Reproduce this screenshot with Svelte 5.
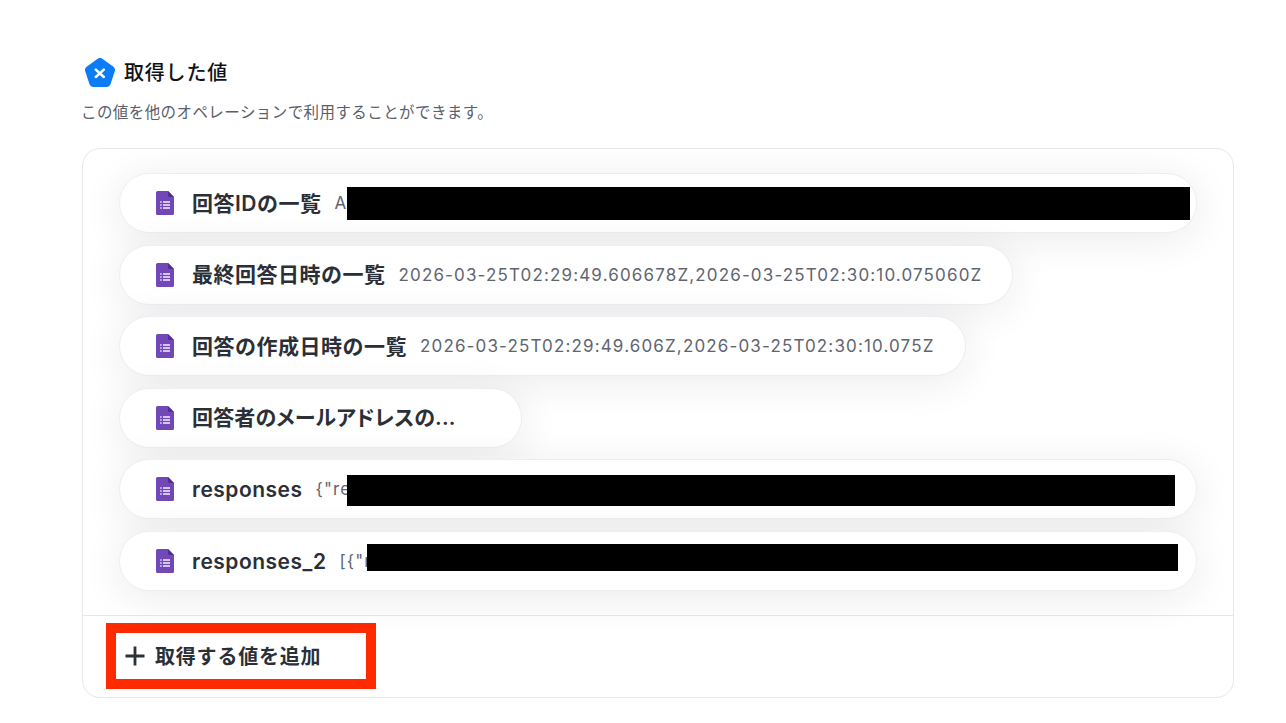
<script>
  const rows = [
    { label: '回答IDの一覧', value: 'A', wide: true, mask: 'm1' },
    { label: '最終回答日時の一覧', value: '2026-03-25T02:29:49.606678Z,2026-03-25T02:30:10.075060Z' },
    { label: '回答の作成日時の一覧', value: '2026-03-25T02:29:49.606Z,2026-03-25T02:30:10.075Z' },
    { label: '回答者のメールアドレスの...', value: '', cut: true },
    { label: 'responses', value: '{"res', wide: true, mask: 'm2', latin: true },
    { label: 'responses_2', value: '[{"re', wide: true, mask: 'm3', latin: true }
  ];
</script>

<main class="page">
  <header class="title">
    <svg class="logo" viewBox="2 1 26 25" width="30" height="29" aria-hidden="true">
      <path d="M13 1.600a3.400 3.400 0 0 1 4 0l9.600 7a3.400 3.400 0 0 1 1.200 3.800l-3.700 11.300a3.400 3.400 0 0 1-3.200 2.300H9.100a3.400 3.400 0 0 1-3.200-2.300L2.200 12.400a3.400 3.400 0 0 1 1.200-3.800z" fill="#0a7cf5"/>
      <path d="M11.300 11l7 6.400M18.300 11l-7 6.400" stroke="#fff" stroke-width="2.200" stroke-linecap="round"/>
    </svg>
    <h1>取得した値</h1>
  </header>
  <p class="desc">この値を他のオペレーションで利用することができます。</p>

  <section class="card">
    <div class="list">
      {#each rows as row}
        <div class="pill" class:wide={row.wide} class:cut={row.cut} class:latin={row.latin}>
          <svg class="doc" viewBox="0 0 18 24" width="18" height="24" aria-hidden="true">
            <path d="M1.600 0H12l6 6v16.400a1.600 1.600 0 0 1-1.600 1.600H1.600A1.600 1.600 0 0 1 0 22.400V1.600A1.600 1.600 0 0 1 1.600 0z" fill="#7248b9"/>
            <path d="M12 0l6 6h-4.500A1.500 1.500 0 0 1 12 4.500z" fill="#4f2f91"/>
            <path d="M7 11h7M7 14h7M7 17h7M4.200 11h1.400M4.200 14h1.400M4.200 17h1.400" stroke="#f6f1fc" stroke-width="1.400"/>
          </svg>
          <span class="label">{row.label}</span>
          {#if row.value}<span class="value">{row.value}</span>{/if}
          {#if row.mask}<span class="mask {row.mask}"></span>{/if}
        </div>
      {/each}
    </div>
    <footer class="foot">
      <button class="add" type="button">
        <svg viewBox="0 0 20 20" width="20" height="20" aria-hidden="true">
          <path d="M10 .5v19M.5 10h19" stroke="#2c3038" stroke-width="2.800"/>
        </svg>
        <span class="add-text">取得する値を追加</span>
      </button>
    </footer>
  </section>
</main>

<style>
  :global(body) {
    margin: 0;
    background: #fff;
    font-family: Inter, "Noto Sans CJK JP", sans-serif;
  }
  .page {
    width: 1152px;
    margin-left: 82px;
    padding-top: 57px;
    box-sizing: border-box;
    height: 723px;
    overflow: hidden;
  }
  .title {
    display: flex;
    align-items: center;
    gap: 9px;
    padding-left: 3px;
    height: 31px;
  }
  h1 {
    margin: 2px 0 0;
    font-size: 20px;
    font-weight: 500;
    letter-spacing: 0.8px;
    color: #101216;
    line-height: 31px;
  }
  .desc {
    margin: 14px 0 0 -1px;
    font-size: 15.500px;
    line-height: 22px;
    color: #5a606b;
    letter-spacing: 0.42px;
  }
  .card {
    margin-top: 24px;
    height: 550px;
    box-sizing: border-box;
    border: 1px solid #e5e7eb;
    border-radius: 18px;
    display: flex;
    flex-direction: column;
    overflow: hidden;
  }
  .list {
    flex: 1;
    padding: 24px 36px 0;
    display: flex;
    flex-direction: column;
    align-items: flex-start;
    gap: 11.600px;
  }
  .pill {
    position: relative;
    height: 60px;
    box-sizing: border-box;
    border: 1px solid #eceef2;
    border-radius: 30px;
    background: #fff;
    box-shadow: 0 6px 40px rgba(30, 30, 40, 0.09);
    display: flex;
    align-items: center;
    padding: 0 30px 0 36px;
    white-space: nowrap;
  }
  .pill.wide { width: 1078px; }
  .pill.cut { width: 403px; }
  .doc { flex: none; margin-right: 18px; }
  .label {
    font-size: 21px;
    font-weight: 600;
    color: #2b2f37;
    letter-spacing: 0.5px;
    margin-bottom: 3px;
  }
  .latin .label { margin: 1px 0 0; }
  .cut .label {
    font-feature-settings: "palt";
    letter-spacing: 0.15px;
  }
  .value {
    margin-left: 13px;
    font-size: 17px;
    color: #5f6570;
    letter-spacing: 1.150px;
  }
  .mask { position: absolute; background: #000; }
  .m1 { left: 227px; top: 13px; width: 843px; height: 33px; }
  .m2 { left: 227px; top: 15px; width: 828px; height: 31px; }
  .m3 { left: 247px; top: 12px; width: 811px; height: 27px; }
  .foot {
    height: 82px;
    flex: none;
    border-top: 1px solid #e5e7eb;
    padding: 7px 0 0 23px;
    box-sizing: border-box;
  }
  .add {
    width: 270px;
    height: 66px;
    box-sizing: border-box;
    border: 10px solid #ff2a00;
    background: #fff;
    padding: 0 0 0 9px;
    display: flex;
    align-items: center;
    gap: 10px;
    font: 600 20px Inter, "Noto Sans CJK JP", sans-serif;
    letter-spacing: 0.8px;
    color: #2b2f37;
  }
  .add-text { margin-bottom: 2px; }
</style>
